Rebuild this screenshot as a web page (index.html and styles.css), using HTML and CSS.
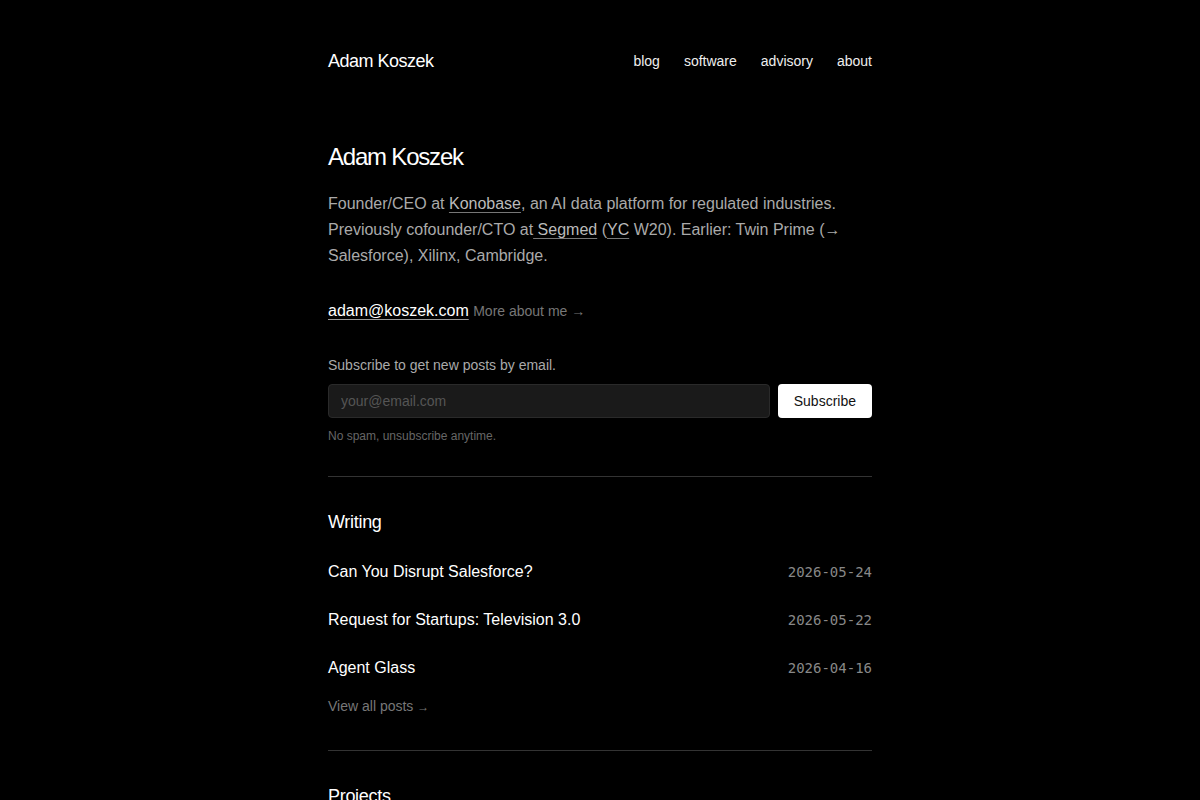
FILE: index.html
```html
<!DOCTYPE html>
<html lang="en">
<head>
  <meta charset="UTF-8">
  <title>Adam Koszek</title>
  <link rel="stylesheet" href="styles.css">
</head>
<body>
  <div class="pagina">
    <header class="cabecera">
      <a class="marca" href="#">Adam Koszek</a>
      <nav class="menu">
        <a href="#">blog</a>
        <a href="#">software</a>
        <a href="#">advisory</a>
        <a href="#">about</a>
      </nav>
    </header>

    <section class="intro">
      <h1>Adam Koszek</h1>
      <p class="bio">Founder/CEO at <a href="#">Konobase</a>, an AI data platform for regulated industries. Previously cofounder/CTO at<a href="#"> Segmed</a> (<a href="#">YC</a> W20). Earlier: Twin Prime (→ Salesforce), Xilinx, Cambridge.</p>
      <p class="contacto"><a class="correo" href="#">adam@koszek.com</a> <a class="mas" href="#">More about me →</a></p>
    </section>

    <section class="suscribir">
      <p class="suscribir-texto">Subscribe to get new posts by email.</p>
      <form class="suscribir-form">
        <input type="email" placeholder="your@email.com">
        <button type="button">Subscribe</button>
      </form>
      <p class="nota">No spam, unsubscribe anytime.</p>
    </section>

    <hr>

    <section class="escritos">
      <h2>Writing</h2>
      <ul class="lista">
        <li><a href="#">Can You Disrupt Salesforce?</a><time>2026-05-24</time></li>
        <li><a href="#">Request for Startups: Television 3.0</a><time>2026-05-22</time></li>
        <li><a href="#">Agent Glass</a><time>2026-04-16</time></li>
      </ul>
      <a class="ver-todo" href="#">View all posts <span class="flecha">→</span></a>
    </section>

    <hr class="separador">

    <section class="proyectos">
      <h2>Projects</h2>
    </section>
  </div>
</body>
</html>
```

FILE: styles.css
```css
body {
  margin: 0;
  background: #000;
  color: #e8e8e8;
  font-family: "Liberation Sans", Arial, sans-serif;
}

a {
  color: inherit;
  text-decoration: none;
}

.pagina {
  width: 544px;
  margin: 0 auto;
  padding-top: 50px;
}

.cabecera {
  display: flex;
  justify-content: space-between;
  align-items: center;
  height: 22px;
}

.marca {
  font-size: 18px;
  color: #fff;
  letter-spacing: -0.5px;
}

.menu {
  display: flex;
  gap: 24px;
  font-size: 14px;
}

.menu a {
  color: #eee;
}

.intro {
  margin-top: 70px;
}

h1 {
  margin: 0;
  font-size: 24px;
  font-weight: 400;
  line-height: 30px;
  color: #fff;
  letter-spacing: -1.2px;
}

.bio {
  margin: 19px 0 0;
  font-size: 16px;
  line-height: 26px;
  color: #aaa;
}

.bio a {
  color: #bbb;
  text-decoration: underline;
  text-decoration-color: #777;
  text-underline-offset: 3px;
}

.flecha {
  font-size: 12px;
}

.contacto {
  margin: 32px 0 0;
  font-size: 16px;
  line-height: 20px;
}

.correo {
  color: #fff;
  text-decoration: underline;
  text-decoration-color: #999;
  text-underline-offset: 3px;
}

.mas {
  font-size: 14px;
  color: #777;
}

.suscribir {
  margin-top: 35px;
}

.suscribir-texto {
  margin: 0;
  font-size: 14px;
  line-height: 18px;
  color: #aaa;
}

.suscribir-form {
  display: flex;
  gap: 8px;
  margin-top: 10px;
}

.suscribir-form input {
  flex: 1;
  height: 34px;
  box-sizing: border-box;
  padding: 0 12px;
  background: #1a1a1a;
  border: 1px solid #2a2a2a;
  border-radius: 4px;
  color: #ddd;
  font: 14px "Liberation Sans", Arial, sans-serif;
}

.suscribir-form input::placeholder {
  color: #555;
}

.suscribir-form button {
  height: 34px;
  padding: 0 16px;
  background: #fff;
  color: #111;
  border: 0;
  border-radius: 4px;
  font: 14px "Liberation Sans", Arial, sans-serif;
}

.nota {
  margin: 10px 0 0;
  font-size: 12px;
  line-height: 16px;
  color: #666;
}

hr {
  border: 0;
  border-top: 1px solid #333;
  margin: 32px 0 0;
}

hr.separador {
  margin-top: 35px;
}

h2 {
  margin: 0;
  font-size: 18px;
  font-weight: 400;
  line-height: 22px;
  color: #fff;
  letter-spacing: -0.3px;
}

.escritos {
  padding-top: 34px;
}

.lista {
  list-style: none;
  margin: 20px 0 0;
  padding: 0;
}

.lista li {
  display: flex;
  justify-content: space-between;
  align-items: baseline;
  height: 48px;
  line-height: 22px;
  padding-top: 8px;
  box-sizing: border-box;
}

.lista a {
  font-size: 16px;
  color: #fff;
}

.lista time {
  font-family: "DejaVu Sans Mono", monospace;
  font-size: 14px;
  color: #888;
}

.ver-todo {
  display: inline-block;
  margin-top: -5px;
  font-size: 14px;
  color: #777;
}

.proyectos {
  padding-top: 34px;
}
```
